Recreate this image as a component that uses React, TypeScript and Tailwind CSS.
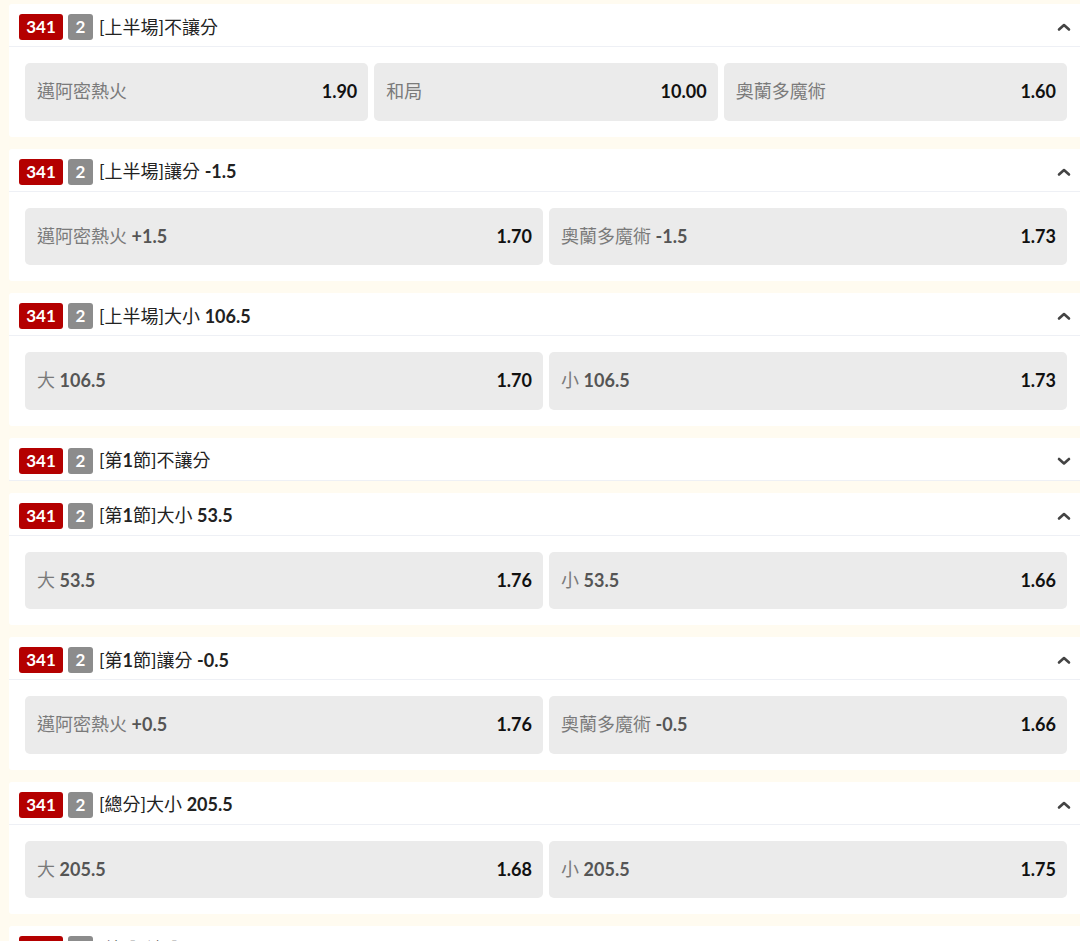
import { ReactNode } from "react"

type Option = { label: ReactNode; odds: string }

type Market = {
  title: ReactNode
  open: boolean
  options: Option[]
}

function B({ children }: { children: ReactNode }) {
  return <span className="font-bold">{children}</span>
}

function GB({ children }: { children: ReactNode }) {
  return <span className="font-bold text-[#555]">{children}</span>
}

const markets: Market[] = [
  {
    title: <>[上半場]不讓分</>,
    open: true,
    options: [
      { label: "邁阿密熱火", odds: "1.90" },
      { label: "和局", odds: "10.00" },
      { label: "奧蘭多魔術", odds: "1.60" }
    ]
  },
  {
    title: <>[上半場]讓分 <B>-1.5</B></>,
    open: true,
    options: [
      { label: <>邁阿密熱火 <GB>+1.5</GB></>, odds: "1.70" },
      { label: <>奧蘭多魔術 <GB>-1.5</GB></>, odds: "1.73" }
    ]
  },
  {
    title: <>[上半場]大小 <B>106.5</B></>,
    open: true,
    options: [
      { label: <>大 <GB>106.5</GB></>, odds: "1.70" },
      { label: <>小 <GB>106.5</GB></>, odds: "1.73" }
    ]
  },
  {
    title: <>[第<B>1</B>節]不讓分</>,
    open: false,
    options: []
  },
  {
    title: <>[第<B>1</B>節]大小 <B>53.5</B></>,
    open: true,
    options: [
      { label: <>大 <GB>53.5</GB></>, odds: "1.76" },
      { label: <>小 <GB>53.5</GB></>, odds: "1.66" }
    ]
  },
  {
    title: <>[第<B>1</B>節]讓分 <B>-0.5</B></>,
    open: true,
    options: [
      { label: <>邁阿密熱火 <GB>+0.5</GB></>, odds: "1.76" },
      { label: <>奧蘭多魔術 <GB>-0.5</GB></>, odds: "1.66" }
    ]
  },
  {
    title: <>[總分]大小 <B>205.5</B></>,
    open: true,
    options: [
      { label: <>大 <GB>205.5</GB></>, odds: "1.68" },
      { label: <>小 <GB>205.5</GB></>, odds: "1.75" }
    ]
  },
  {
    title: <>[總分]讓分 <B>-3.5</B></>,
    open: true,
    options: [
      { label: <>邁阿密熱火 <GB>+3.5</GB></>, odds: "1.72" },
      { label: <>奧蘭多魔術 <GB>-3.5</GB></>, odds: "1.70" }
    ]
  }
]

function Chevron({ up }: { up: boolean }) {
  return (
    <svg width="14" height="10" viewBox="0 0 14 10" className="text-[#444]">
      <path
        d={up ? "M2 7.5 L7 3 L12 7.5" : "M2 3 L7 7.5 L12 3"}
        fill="none"
        stroke="currentColor"
        strokeWidth="2.6"
        strokeLinecap="round"
        strokeLinejoin="round"
      />
    </svg>
  )
}

function MarketCard({ m }: { m: Market }) {
  return (
    <div className="bg-white rounded-l-[3px]">
      {/* header */}
      <div className="h-[43px] flex items-center pl-[10px] pr-[8px] pt-[4px] border-b border-[#eef0f5]">
        <span className="h-[26px] w-[44px] rounded-[3px] bg-[#b40000] text-white font-bold text-[17px] flex items-center justify-center">
          341
        </span>
        <span className="ml-[5px] h-[26px] w-[25px] rounded-[3px] bg-[#8c8c8c] text-white font-bold text-[17px] flex items-center justify-center">
          2
        </span>
        <span className="ml-[6px] text-[18px] text-[#222]">{m.title}</span>
        <span className="ml-auto mr-[1px]">
          <Chevron up={m.open} />
        </span>
      </div>

      {/* options */}
      {m.open && (
        <div
          className={`grid gap-[6px] pl-[16px] pr-[13px] py-[16px] ${
            m.options.length === 3 ? "grid-cols-3" : "grid-cols-2"
          }`}
        >
          {m.options.map((o, i) => (
            <div
              key={i}
              className="h-[57.5px] bg-[#ebebeb] rounded-[5px] flex items-center justify-between px-[12px] pr-[11px]"
            >
              <span className="text-[18px] text-[#7a7a7a]">{o.label}</span>
              <span className="text-[18px] font-bold text-[#111]">{o.odds}</span>
            </div>
          ))}
        </div>
      )}
    </div>
  )
}

export default function App() {
  return (
    <div
      className="h-[941px] overflow-hidden bg-[#fffbf0] pl-[9px] pt-[4px]"
      style={{ fontFamily: "Lato, 'Noto Sans CJK TC', sans-serif" }}
    >
      <div className="flex flex-col gap-[12px]">
        {markets.map((m, i) => (
          <MarketCard key={i} m={m} />
        ))}
      </div>
    </div>
  )
}
